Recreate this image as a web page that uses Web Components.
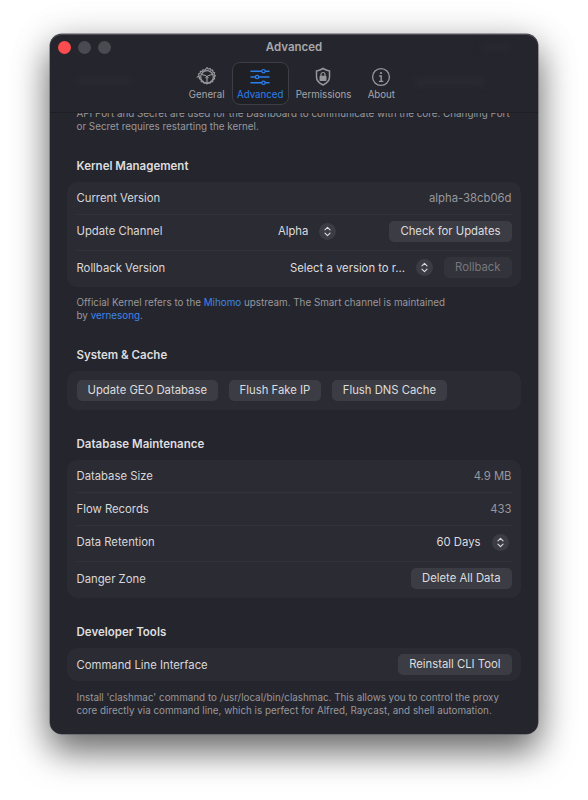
<!DOCTYPE html>
<html>
<head>
<meta charset="utf-8">
<title>Advanced</title>
<style>
  html, body { margin: 0; background: #fff; }
  body { font-family: Inter, "Liberation Sans", sans-serif; padding: 34px 50px 0; height: 800px; box-sizing: border-box; overflow: hidden; }
  .btns { display: flex; gap: 10.600px; height: 39px; align-items: center; }
</style>
</head>
<body>
<settings-window>
  <tool-bar slot="bar"></tool-bar>
  <p-note class="top">API Port and Secret are used for the Dashboard to communicate with the core. Changing Port or Secret requires restarting the kernel.</p-note>

  <s-title>Kernel Management</s-title>
  <s-card>
    <s-row label="Current Version"><span class="val">alpha-38cb06d</span></s-row>
    <s-row label="Update Channel" tall><s-picker style="margin-right:53px">Alpha</s-picker><s-btn>Check for Updates</s-btn></s-row>
    <s-row label="Rollback Version" tall last><s-picker style="margin-right:11px">Select a version to r...</s-picker><s-btn disabled>Rollback</s-btn></s-row>
  </s-card>
  <p-note>Official Kernel refers to the <a>Mihomo</a> upstream. The Smart channel is maintained<br>by <a>vernesong</a>.</p-note>

  <s-title style="--top:26px">System &amp; Cache</s-title>
  <s-card>
    <div class="btns"><s-btn>Update GEO Database</s-btn><s-btn>Flush Fake IP</s-btn><s-btn>Flush DNS Cache</s-btn></div>
  </s-card>

  <s-title>Database Maintenance</s-title>
  <s-card>
    <s-row label="Database Size"><span class="val">4.9 MB</span></s-row>
    <s-row label="Flow Records"><span class="val">433</span></s-row>
    <s-row label="Data Retention" tall><s-picker style="margin-right:3px">60 Days</s-picker></s-row>
    <s-row label="Danger Zone" tall last><s-btn>Delete All Data</s-btn></s-row>
  </s-card>

  <s-title>Developer Tools</s-title>
  <s-card>
    <s-row label="Command Line Interface" last><s-btn>Reinstall CLI Tool</s-btn></s-row>
  </s-card>
  <p-note style="--gap:10px">Install 'clashmac' command to /usr/local/bin/clashmac. This allows you to control the proxy core directly via command line, which is perfect for Alfred, Raycast, and shell automation.</p-note>
</settings-window>

<script>
  const ICONS = {
    General: `<svg viewBox="0 0 24 24" width="24" height="24" fill="none" stroke="currentColor" stroke-width="1.200"><path d="M12 2.700l1.200 1.400 1.800-.6.800 1.700 1.900-.1.200 1.900 1.700.8-.6 1.800 1.400 1.200-1.400 1.200.6 1.800-1.700.8-.2 1.900-1.900-.1-.8 1.700-1.800-.6-1.200 1.400-1.200-1.400-1.800.6-.8-1.700-1.900.1-.2-1.900-1.700-.8.6-1.800L2.700 12l1.400-1.200-.6-1.800 1.700-.8.200-1.900 1.900.1.800-1.700 1.800.6z"/><circle cx="12" cy="12" r="6.300"/><path d="M10.700 12.800L12 10.700l1.300 2.100z" stroke-width="1"/><path d="M13 10.800l4.800-1.600M11 10.800L6.200 9.200M12 13v5.100"/></svg>`,
    Advanced: `<svg viewBox="0 0 26 24" width="26" height="24" fill="none" stroke="currentColor" stroke-width="1.500" stroke-linecap="round"><path d="M4 6.200h10.400M18.600 6.200H22M4 12h4M12.200 12H22M4 17.800h10.400M18.600 17.800H22"/><circle cx="16.500" cy="6.200" r="1.700" stroke-width="1.200"/><circle cx="10.100" cy="12" r="1.700" stroke-width="1.200"/><circle cx="16.500" cy="17.800" r="1.700" stroke-width="1.200"/></svg>`,
    Permissions: `<svg viewBox="0 0 24 24" width="24" height="24" fill="none" stroke="currentColor" stroke-width="1.500"><path d="M12 3.500c2.300 1.500 4.400 2.100 6.500 2.400v6.100c0 3.800-2.700 6.200-6.500 8-3.800-1.800-6.500-4.200-6.500-8V5.900c2.100-.3 4.200-.9 6.500-2.400z"/><rect x="8.500" y="10.800" width="7" height="5.300" rx="1" fill="currentColor" stroke="none"/><path d="M10 11V9.500a2 2 0 0 1 4 0V11" stroke-width="1.200"/></svg>`,
    About: `<svg viewBox="0 0 24 24" width="24" height="24" fill="none" stroke="currentColor" stroke-width="1.300"><circle cx="12" cy="12" r="8.400"/><circle cx="12" cy="8" r="1.100" fill="currentColor" stroke="none"/><path d="M10.200 11h2v5.300M9.900 16.400h4.400" stroke-width="1.400"/></svg>`
  };

  class SettingsWindow extends HTMLElement {
    constructor() {
      super();
      this.attachShadow({ mode: 'open' });
      this.shadowRoot.innerHTML = `
        <style>
          :host {
            display: block; width: 488px; height: 700px; box-sizing: border-box; position: relative;
            background: #25252d; border-radius: 12px;
            color: #dcdcde; font-size: 11.300px;
            box-shadow: inset 0 1px 0 #4d4d53, 0 0 0 .5px #55555c, 0 18px 34px rgba(0,0,0,.5), 0 6px 40px rgba(0,0,0,.2);
          }
          .clip { height: 100%; border-radius: 12px; overflow: hidden; display: flex; flex-direction: column; }
          .bar { flex: none; height: 78px; border-bottom: 1px solid #1e1e24; }
          .body { flex: 1; overflow: hidden; padding: 0 17px; }
        </style>
        <div class="clip">
          <div class="bar"><slot name="bar"></slot></div>
          <div class="body"><slot></slot></div>
        </div>`;
    }
  }

  class ToolBar extends HTMLElement {
    constructor() {
      super();
      this.attachShadow({ mode: 'open' });
      const tabs = Object.keys(ICONS).map(n =>
        `<div class="tab ${n === 'Advanced' ? 'on' : ''}">${ICONS[n]}<span>${n}</span></div>`).join('');
      this.shadowRoot.innerHTML = `
        <style>
          :host { display: block; height: 78px; position: relative; }
          .lights { position: absolute; left: 8px; top: 7px; display: flex; gap: 7px; }
          .lights i { width: 13px; height: 13px; border-radius: 50%; background: #4a4a50; }
          .lights i:first-child { background: #fb4d4f; }
          .smudge { position: absolute; background: #2a2a32; filter: blur(3px); border-radius: 4px; }
          .title { text-align: center; padding-top: 7px; font-size: 11.500px; line-height: 13px; font-weight: 600; color: #a8a8ab; }
          .tabs { display: flex; justify-content: center; margin-top: 8px; }
          .tab { box-sizing: border-box; height: 43px; padding: 2px 4px 0; display: flex; flex-direction: column; align-items: center;
                 color: #a6a6a9; font-size: 9.700px; line-height: 12px; border: 1px solid transparent; border-radius: 8px; min-width: 48px; }
          .tab svg { flex: none; color: #98989c; }
          .tab.on { color: #2a80ee; background: #1f1f26; border-color: #3e3e46; width: 57px; margin: 0 2px 0 1px; }
          .tab.on svg { color: #2a80ee; }
          .tab:nth-child(3) { margin-right: 1px; }
        </style>
        <div class="lights"><i></i><i></i><i></i></div>
        <span class="smudge" style="left:26px;top:44px;width:55px;height:7px"></span>
        <span class="smudge" style="left:364px;top:44px;width:72px;height:8px"></span>
        <span class="smudge" style="left:432px;top:11px;width:30px;height:5px"></span>
        <div class="title">Advanced</div>
        <div class="tabs">${tabs}</div>`;
    }
  }

  class SectionTitle extends HTMLElement {
    constructor() {
      super();
      this.attachShadow({ mode: 'open' });
      this.shadowRoot.innerHTML = `
        <style>
          :host { display: block; margin: var(--top, 27px) 0 9px 9.500px; font-size: 11.500px; line-height: 14px; font-weight: 600; color: #dededf; }
        </style><slot></slot>`;
    }
  }

  class SettingsCard extends HTMLElement {
    constructor() {
      super();
      this.attachShadow({ mode: 'open' });
      this.shadowRoot.innerHTML = `
        <style>
          :host { display: block; background: #2b2b33; border-radius: 10px; padding: 0 9.500px; }
        </style><slot></slot>`;
    }
  }

  class SettingsRow extends HTMLElement {
    constructor() {
      super();
      this.attachShadow({ mode: 'open' });
      this.shadowRoot.innerHTML = `
        <style>
          :host { display: flex; align-items: center; box-sizing: border-box; height: 33px; border-bottom: 1px solid #33333b; font-size: 11.300px; }
          :host([tall]) { height: 36px; padding-bottom: 3px; }
          :host([last]) { border-bottom: 0; }
          .label { flex: 1; color: #d8d8da; }
          ::slotted(.val) { color: #98989c; }
        </style>
        <div class="label">${this.getAttribute('label')}</div><slot></slot>`;
    }
  }

  class SettingsButton extends HTMLElement {
    constructor() {
      super();
      this.attachShadow({ mode: 'open' });
      this.shadowRoot.innerHTML = `
        <style>
          :host { display: block; box-sizing: border-box; height: 21px; line-height: 21px; padding: 0 11px; border-radius: 5px; background: #3c3c44; color: #dcdcde; font-size: 11.300px; white-space: nowrap; }
          :host([disabled]) { background: #33333b; color: #77777c; }
        </style><slot></slot>`;
    }
  }

  class SelectPicker extends HTMLElement {
    constructor() {
      super();
      this.attachShadow({ mode: 'open' });
      this.shadowRoot.innerHTML = `
        <style>
          :host { display: flex; align-items: center; gap: 11px; color: #dcdcde; font-size: 11.300px; white-space: nowrap; }
          .arrows { width: 17px; height: 17px; border-radius: 50%; background: #3c3c44; display: flex; align-items: center; justify-content: center; }
        </style>
        <slot></slot>
        <span class="arrows"><svg viewBox="0 0 10 12" width="9" height="11" fill="none" stroke="#dcdcde" stroke-width="1.300" stroke-linecap="round" stroke-linejoin="round"><path d="M2.200 4.200L5 1.500l2.800 2.700M2.200 7.800L5 10.500l2.800-2.700"/></svg></span>`;
    }
  }

  class NoteText extends HTMLElement {
    constructor() {
      super();
      this.attachShadow({ mode: 'open' });
      this.shadowRoot.innerHTML = `
        <style>
          :host { display: block; margin: var(--gap, 9px) 9.500px 0; font-size: 9.840px; line-height: 13px; color: #98989c; }
          :host(.top) { margin-top: -6px; height: 25px; }
          ::slotted(a) { color: #3d86e6; }
        </style><slot></slot>`;
    }
  }

  customElements.define('settings-window', SettingsWindow);
  customElements.define('tool-bar', ToolBar);
  customElements.define('s-title', SectionTitle);
  customElements.define('s-card', SettingsCard);
  customElements.define('s-row', SettingsRow);
  customElements.define('s-btn', SettingsButton);
  customElements.define('s-picker', SelectPicker);
  customElements.define('p-note', NoteText);
</script>
</body>
</html>
